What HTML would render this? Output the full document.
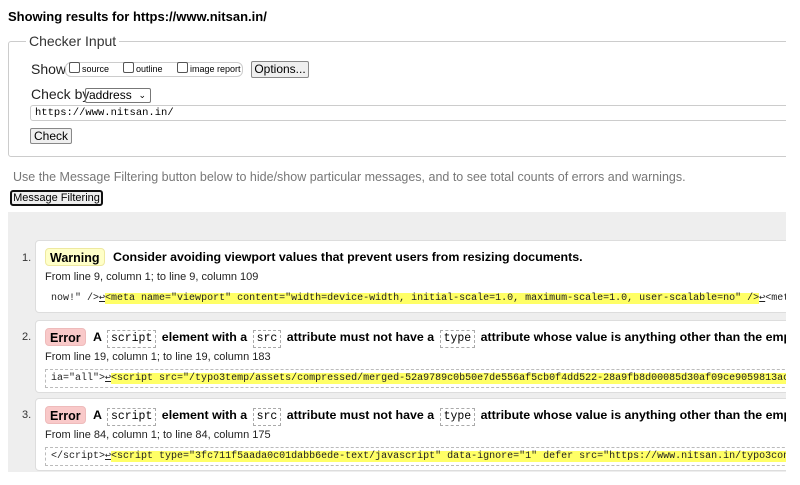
<!DOCTYPE html>
<html><head><style>
*{box-sizing:border-box}
body{margin:0;width:800px;height:485px;overflow:hidden;background:#fff;font-family:"Liberation Sans",Arial,sans-serif;color:#000;position:relative}
.a{position:absolute;white-space:nowrap}
.clip{position:absolute;left:0;top:0;width:786px;height:485px;overflow:hidden}
.btn{position:absolute;border:1px solid #888;border-radius:2px;background:#efefef;font-size:12px;text-align:center;white-space:nowrap}
.cb{display:inline-block;width:11px;height:11px;border:1px solid #555;border-radius:2px;vertical-align:-1px;margin-right:2px;background:#fff}
.card{position:absolute;left:35px;width:770px;height:73px;background:#fff;border:1px solid #ddd;border-radius:4px}
.num{position:absolute;left:22px;font-size:11px;color:#333}
.badge{position:absolute;left:9px;top:7px;height:18px;padding:0 4px;border-radius:4px;font-weight:bold;font-size:12.5px;line-height:18px}
.warn{background:#ffffc8;border:1px solid #eee9a0}
.err{background:#f9c9c9;border:1px solid #ebb}
.title{position:absolute;top:6px;font-weight:bold;font-size:12.4px;line-height:20px;white-space:nowrap}
.kw{display:inline-block;font-family:"Liberation Mono",monospace;font-weight:normal;font-size:11.5px;border:1px dashed #aaa;padding:0 3px;line-height:16px;margin:0 2px}
.loc{position:absolute;left:9px;top:30px;font-size:11px;color:#222;white-space:nowrap}
.code{position:absolute;left:9px;top:48px;width:800px;height:19px;border:1px dashed #bbb;font-family:"Liberation Mono",monospace;font-size:10px;line-height:17px;padding-left:5px;color:#222;white-space:nowrap}
.hl{background:#ffff66}
</style></head><body>
<div class="clip">
<div class="a" style="left:8px;top:9px;font-size:13px;font-weight:bold">Showing results for https://www.nitsan.in/</div>
<div style="position:absolute;left:8px;top:41px;width:800px;height:116px;border:1px solid #ccc;border-radius:3px"></div>
<div class="a" style="left:26px;top:33px;background:#fff;padding:0 3px;font-size:14px;color:#333">Checker Input</div>
<div class="a" style="left:31px;top:61px;font-size:14px;color:#222">Show</div>
<div style="position:absolute;left:65px;top:62px;width:178px;height:15px;border:1px solid #ccc;border-radius:6px"></div>
<div class="a" style="left:69px;top:62px;font-size:9px;line-height:14px"><span class="cb"></span>source</div>
<div class="a" style="left:123px;top:62px;font-size:9px;line-height:14px"><span class="cb"></span>outline</div>
<div class="a" style="left:177px;top:62px;font-size:9px;line-height:14px"><span class="cb"></span>image report</div>
<div class="btn" style="left:251px;top:61px;width:58px;height:17px;line-height:15px">Options...</div>
<div class="a" style="left:31px;top:86px;font-size:14px;color:#222">Check by</div>
<div style="position:absolute;left:85px;top:88px;width:66px;height:15px;border:1px solid #777;border-radius:2px;font-size:12px;line-height:13px;padding-left:3px;white-space:nowrap">address<span style="position:absolute;right:4px;top:0;font-size:9px">&#8964;</span></div>
<div style="position:absolute;left:30px;top:105px;width:800px;height:16px;border:1px solid #ccc;border-radius:3px;font-family:'Liberation Mono',monospace;font-size:10.5px;line-height:14px;padding-left:4px">https://www.nitsan.in/</div>
<div class="btn" style="left:30px;top:128px;width:42px;height:16px;line-height:14px">Check</div>
<div class="a" style="left:13px;top:170px;font-size:12.5px;color:#777">Use the Message Filtering button below to hide/show particular messages, and to see total counts of errors and warnings.</div>
<div class="btn" style="left:10px;top:190px;width:93px;height:16px;line-height:13px;border:2px solid #111;border-radius:3px;font-size:11px">Message Filtering</div>
<div style="position:absolute;left:8px;top:212px;width:800px;height:260px;background:#eeeeee"></div>

<div class="num" style="top:252px">1.</div>
<div class="card" style="top:240px">
 <div class="badge warn">Warning</div>
 <div class="title" style="left:77px">Consider avoiding viewport values that prevent users from resizing documents.</div>
 <div class="loc">From line 9, column 1; to line 9, column 109</div>
 <div class="code" style="border-color:transparent">now!" /&gt;<u>&#8617;</u><span class="hl">&lt;meta name="viewport" content="width=device-width, initial-scale=1.0, maximum-scale=1.0, user-scalable=no" /&gt;</span><u>&#8617;</u>&lt;meta</div>
</div>

<div class="num" style="top:331px">2.</div>
<div class="card" style="top:320px">
 <div class="badge err">Error</div>
 <div class="title" style="left:57px">A <span class="kw">script</span> element with a <span class="kw">src</span> attribute must not have a <span class="kw">type</span> attribute whose value is anything other than the empty string</div>
 <div class="loc">From line 19, column 1; to line 19, column 183</div>
 <div class="code">ia="all"&gt;<u>&#8617;</u><span class="hl">&lt;script src="/typo3temp/assets/compressed/merged-52a9789c0b50e7de556af5cb0f4dd522-28a9fb8d00085d30af09ce9059813ac</span></div>
</div>

<div class="num" style="top:409px">3.</div>
<div class="card" style="top:398px">
 <div class="badge err">Error</div>
 <div class="title" style="left:57px">A <span class="kw">script</span> element with a <span class="kw">src</span> attribute must not have a <span class="kw">type</span> attribute whose value is anything other than the empty string</div>
 <div class="loc">From line 84, column 1; to line 84, column 175</div>
 <div class="code">&lt;/script&gt;<u>&#8617;</u><span class="hl">&lt;script type="3fc711f5aada0c01dabb6ede-text/javascript" data-ignore="1" defer src="https://www.nitsan.in/typo3conf</span></div>
</div>
</div>
</body></html>
